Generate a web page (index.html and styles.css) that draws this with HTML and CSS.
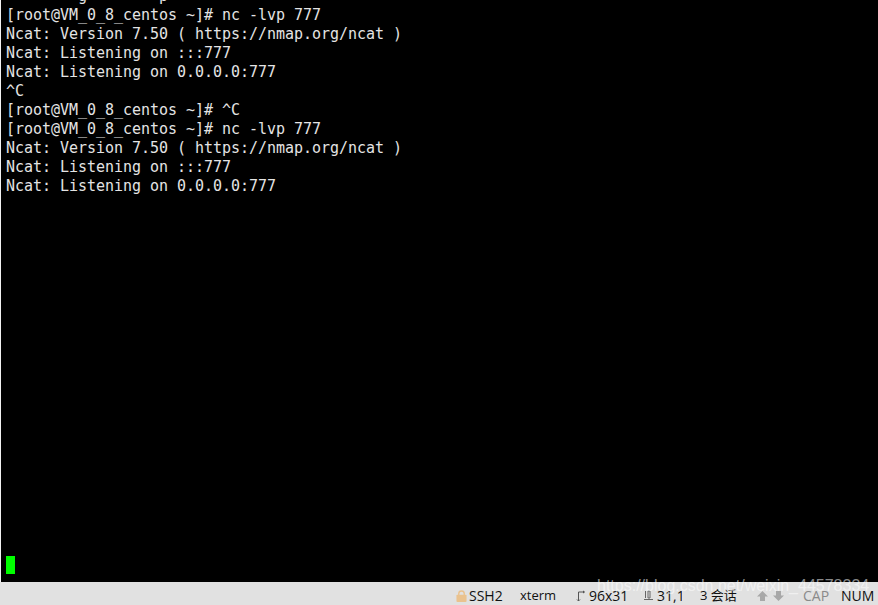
FILE: index.html
```html
<!DOCTYPE html>
<html lang="en">
<head>
<meta charset="utf-8">
<title>Xshell session</title>
<link rel="stylesheet" href="styles.css">
</head>
<body>
<div class="window">
  <main class="terminal">
    <pre class="screen">        g        p
[root@VM_0_8_centos ~]# nc -lvp 777
Ncat: Version 7.50 ( https://nmap.org/ncat )
Ncat: Listening on :::777
Ncat: Listening on 0.0.0.0:777
^C
[root@VM_0_8_centos ~]# ^C
[root@VM_0_8_centos ~]# nc -lvp 777
Ncat: Version 7.50 ( https://nmap.org/ncat )
Ncat: Listening on :::777
Ncat: Listening on 0.0.0.0:777</pre>
    <div class="cursor"></div>
  </main>
  <footer class="status">
    <span class="item ssh">
      <svg class="lock" width="11" height="12" viewBox="0 0 12 13"><path d="M3 6V4a3 3 0 0 1 6 0v2" fill="none" stroke="#eac28e" stroke-width="1.5"/><rect x="0.5" y="5" width="11" height="8" rx="1" fill="#eac28e"/></svg>
      SSH2
    </span>
    <span class="item term">xterm</span>
    <span class="item size">
      <svg width="10" height="12" viewBox="0 0 10 12"><path d="M2.5 2v9M1 9.5l1.5 1.5 1.5-1.5M2.5 2H9M7.5 .8v2.4" fill="none" stroke="#555" stroke-width="1"/></svg>
      96x31
    </span>
    <span class="item pos">
      <svg width="9" height="11" viewBox="0 0 9 11"><path d="M1.5 1v7M4 1v7h2V1zM0 9.5h9" fill="none" stroke="#666" stroke-width="1"/></svg>
      <span class="clip">31,1</span>
    </span>
    <span class="item sessions">3 会话</span>
    <span class="item arrows">
      <svg width="13" height="12" viewBox="0 0 13 12"><path d="M6.5 1L12 6.5H9V11H4V6.5H1z" fill="#a8a8a8"/></svg>
      <svg width="13" height="12" viewBox="0 0 13 12"><path d="M6.5 11L12 5.5H9V1H4V5.5H1z" fill="#a8a8a8"/></svg>
    </span>
    <span class="item cap">CAP</span>
    <span class="item num">NUM</span>
  </footer>
  <div class="watermark">https://blog.csdn.net/weixin_44578334</div>
</div>
</body>
</html>
```
FILE: styles.css
```css
* { box-sizing: border-box; }
html, body { margin: 0; padding: 0; }
body { width: 878px; height: 605px; overflow: hidden; background: #e1e1e1; }
.window { position: relative; width: 878px; height: 605px; display: flex; flex-direction: column; }
.terminal {
  position: relative;
  flex: none;
  height: 582px;
  background: #000;
  border-left: 1px solid #f2f2f2;
  overflow: hidden;
}
.screen {
  margin: -13px 0 0;
  padding-left: 5px;
  font: 15px/19px "DejaVu Sans Mono", monospace;
  letter-spacing: -0.03px;
  color: #e4e4e4;
}
.cursor {
  position: absolute;
  left: 5px;
  top: 556px;
  width: 9px;
  height: 18px;
  background: #00ff00;
}
.status {
  flex: 1;
  min-height: 0;
  display: flex;
  align-items: center;
  padding: 4px 0 0 456px;
  font: 14px/19px "Open Sans", "Noto Sans CJK SC", sans-serif;
  color: #111;
  white-space: nowrap;
}
.item { display: flex; align-items: center; }
.ssh { gap: 2px; width: 64px; }
.term { width: 56px; font-size: 13px; }
.size { gap: 3px; width: 68px; }
.pos { gap: 4px; width: 56px; }
.clip { width: 25px; overflow: hidden; }
.sessions { width: 56px; font-size: 13px; }
.arrows { gap: 3px; width: 47px; }
.cap { width: 38px; color: #8a8a8a; }
.num { color: #111; }
.watermark {
  position: absolute;
  left: 597px;
  top: 574px;
  font: 16px/24px "Liberation Sans", sans-serif;
  color: rgba(255, 255, 255, 0.55);
  white-space: nowrap;
}
```
